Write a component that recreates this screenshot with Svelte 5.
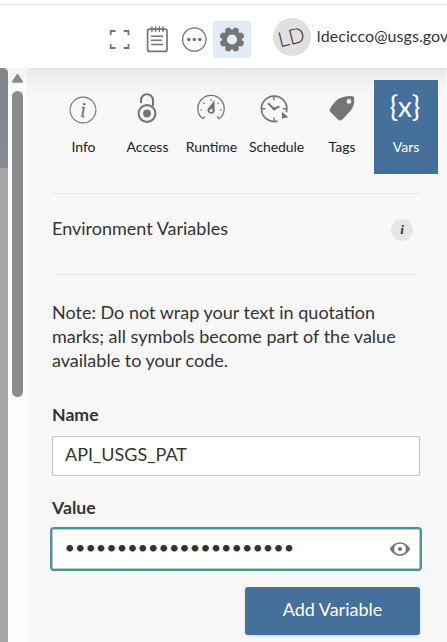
<script>
  const tabs = [
    { id: 'info', label: 'Info' },
    { id: 'access', label: 'Access' },
    { id: 'runtime', label: 'Runtime' },
    { id: 'schedule', label: 'Schedule' },
    { id: 'tags', label: 'Tags' },
    { id: 'vars', label: 'Vars' }
  ];
  let active = $state('vars');
  let name = $state('API_USGS_PAT');
  const secret = '•'.repeat(22);
</script>

<div class="app">
  <header>
    <button class="tool" aria-label="Expand">
      <svg width="38" height="38" viewBox="0 0 38 38"><path d="M10.7 15V11H15.5M23.7 11H28.5V15M28.5 24V28H23.7M15.5 28H10.7V24" fill="none" stroke="#757575" stroke-width="1.8" /></svg>
    </button>
    <button class="tool" aria-label="Logs">
      <svg width="38" height="38" viewBox="0 0 38 38" fill="none" stroke="#757575" stroke-width="1.7" stroke-linecap="round">
        <rect x="9.6" y="9.2" width="19.4" height="22.2" rx="2" />
        <path d="M13.9 7v4.5M17.6 7v4.5M21.3 7v4.5M25 7v4.5M13.6 16.2h11M13.6 20.3h9.5M13.6 24.6h11" stroke-width="1.5" />
      </svg>
    </button>
    <button class="tool" aria-label="More">
      <svg width="38" height="38" viewBox="0 0 38 38"><circle cx="19.3" cy="19.5" r="11.7" fill="none" stroke="#757575" stroke-width="1.3" /><g fill="#757575"><circle cx="13.8" cy="19.5" r="1.8" /><circle cx="19.3" cy="19.5" r="1.8" /><circle cx="24.8" cy="19.5" r="1.8" /></g></svg>
    </button>
    <button class="tool on" aria-label="Settings">
      <svg width="38" height="37" viewBox="0 0 38 37">
        <g transform="translate(19 18.5)" fill="#757575">
          {#each [22.5, 67.5, 112.5, 157.5, 202.5, 247.5, 292.5, 337.5] as a}
            <path d="M-3.6-7L-2.5-12Q0-13.2 2.5-12L3.6-7Z" transform="rotate({a})" />
          {/each}
          <circle r="9.9" />
          <circle r="5.1" fill="#e2ecf7" />
        </g>
      </svg>
    </button>
    <span class="avatar"><span>LD</span></span>
    <span class="email">ldecicco@usgs.gov</span>
  </header>

  <div class="body">
    <div class="page"></div>
    <div class="track">
      <svg width="14" height="12" viewBox="0 0 14 12"><path d="M6.5 1.8L1.8 8.8H11.2Z" fill="#8b8b8b" stroke="#8b8b8b" stroke-width="1.7" stroke-linejoin="round" /></svg>
      <div class="thumb"></div>
    </div>

    <main>
      <nav>
        {#each tabs as t}
          <button class="tab {t.id}" class:active={active === t.id} onclick={() => (active = t.id)}>
            <svg width="34" height="34" viewBox="0 0 34 34">
              {#if t.id === 'info'}
                <circle cx="17" cy="18" r="12.9" fill="none" stroke="#757575" stroke-width="1.1" />
                <text x="17" y="24.5" text-anchor="middle" font-family="Liberation Serif, serif" font-style="italic" font-size="20" fill="#757575" stroke="#757575" stroke-width=".25">i</text>
              {:else if t.id === 'access'}
                <path d="M11 11V8.3A6 6 0 0 1 23 8.3V14" fill="none" stroke="#757575" stroke-width="2.1" />
                <circle cx="17" cy="21.5" r="8.4" fill="none" stroke="#757575" stroke-width="2.1" />
                <circle cx="17" cy="21.5" r="3.9" fill="#757575" />
              {:else if t.id === 'runtime'}
                <path d="M8.5 26.6A13.2 13.2 0 1 1 25.5 26.6" fill="none" stroke="#757575" stroke-width="1.3" />
                <path d="M8.8 27L10.8 24.4M25.2 27L23.2 24.4M6.5 18.2H8M26 18.2H27.5M17 7.3V9M9.4 10.6L10.5 11.7M24.6 10.6L23.5 11.7" stroke="#757575" stroke-width="1.3" />
                <path d="M20.4 8L14.8 15.4A3.6 3.6 0 1 0 20.7 17.4Z" fill="#757575" />
                <circle cx="17.1" cy="18.4" r="1.5" fill="#f8f8f8" />
              {:else if t.id === 'schedule'}
                <path d="M18.5 29.1A12.7 12.7 0 1 1 27.4 20.2" fill="none" stroke="#757575" stroke-width="1.7" />
                <path d="M15 4.5V8.2M15 25.5V29M3 16.8H6.5M23.8 16.8H27.3" stroke="#757575" stroke-width="1.4" />
                <path d="M9 11.2L15.2 17.1L20.4 14.4" fill="none" stroke="#757575" stroke-width="1.9" />
                <circle cx="15.2" cy="16.8" r="1.8" fill="#757575" />
                <path d="M22.9 19.8L22.9 26.6L29.4 25.2Z" fill="#757575" />
              {:else if t.id === 'tags'}
                <path fill-rule="evenodd" fill="#757575" d="M14 6.6Q21 3 27.6 4.2Q29.2 4.4 29.2 6.2Q29.6 13 26.2 18L17.4 27.5Q15.2 29.5 13 27.5L5.6 20.3Q3.7 18.3 5.4 16Q10 9 14 6.6ZM24 7A2.4 2.4 0 1 0 24 11.8A2.4 2.4 0 1 0 24 7Z" />
              {:else}
                <text x="16" y="25" text-anchor="middle" font-family="Lato, sans-serif" font-size="28" fill="#fff" textLength="31" lengthAdjust="spacingAndGlyphs">{'{x}'}</text>
              {/if}
            </svg>
            <span>{t.label}</span>
          </button>
        {/each}
      </nav>

      <section class="heading">
        <h2>Environment Variables</h2>
        <span class="help">i</span>
      </section>

      <p>Note: Do not wrap your text in quotation<br />marks; all symbols become part of the value<br />available to your code.</p>

      <label for="name">Name</label>
      <input id="name" bind:value={name} spellcheck="false" />

      <div class="label">Value</div>
      <div class="secret">
        <span>{secret}</span>
        <svg width="20" height="14" viewBox="0 0 20 14"><path d="M.7 7Q4.5 1 10 1T19.3 7Q15.5 13 10 13T.7 7Z" fill="#fff" stroke="#757575" stroke-width="1.5" /><path d="M.7 7Q3 3.4 6 2.2A7 7 0 0 0 6 11.8Q3 10.6.7 7ZM19.3 7Q17 3.4 14 2.2A7 7 0 0 1 14 11.8Q17 10.6 19.3 7Z" fill="#757575" /><circle cx="10" cy="7" r="2.1" fill="#757575" /></svg>
      </div>

      <div class="actions"><button>Add Variable</button></div>
    </main>
    <div class="edge"></div>
  </div>
</div>

<style>
  .app { width: 447px; height: 642px; overflow: hidden; font-family: Lato, sans-serif; color: #333; background: #fff; display: flex; flex-direction: column; }
  .app * { box-sizing: border-box; }
  button { border: 0; padding: 0; background: none; font: inherit; color: inherit; }
  svg { display: block; overflow: visible; }
  header { height: 68px; flex: none; padding: 16px 0 0 100px; display: flex; align-items: flex-start; background: linear-gradient(#fff 4px, #ddd 4px, #ddd 5px, #fff 5px); white-space: nowrap; }
  .tool { width: 37.6px; height: 38px; margin-top: 4px; flex: none; }
  .tool.on { width: 38px; height: 37px; margin-top: 5px; background: #e2ecf7; border-radius: 3px; }
  .avatar { flex: none; width: 38px; height: 38px; margin: 2px 0 0 22px; border-radius: 50%; background: #e0e0e0; display: grid; place-items: center; font-size: 21px; font-weight: 300; color: #333; }
  .avatar span { transform: rotate(-14deg) translateY(-1.5px); line-height: 1; }
  .email { margin: 9px 0 0 6px; font-size: 16px; line-height: 22px; letter-spacing: 0.08px; flex: none; }
  .body { flex: 1; display: flex; background: linear-gradient(#e6e6e6, #f0f0f0 10px, #f8f8f8 30px); }
  .page { width: 8px; flex: none; border-top-right-radius: 5px; background: linear-gradient(#7e838c, #858a94 100px, #a5a6a9 100px); }
  .track { width: 19px; flex: none; background: linear-gradient(#f4f4f4, #fcfcfc 20px); padding: 5px 0 0 3px; }
  .track svg { margin-left: 0; }
  .thumb { width: 11px; height: 306px; margin: 6px 0 0 1px; border-radius: 6px; background: #8b8b8b; }
  main { width: 418px; flex: none; padding: 12px 0 0 25px; }
  nav { display: flex; width: 387px; margin-left: -1px; }
  .tab { width: 64px; height: 94px; padding-top: 12px; flex: none; display: flex; flex-direction: column; align-items: center; font-size: 14px; line-height: 20px; color: #222; }
  .tab span { margin-top: 11px; padding-left: 1px; }
  .tab.schedule { width: 66px; }
  .tab.schedule span { letter-spacing: -0.08px; }
  .tab.tags { width: 65px; }
  .tab.active { background: #45709b; color: #fff; }
  .tab.active span { padding-left: 0; }
  .heading { width: 368px; height: 82px; margin-top: 19px; border: 1px solid #ebebeb; border-width: 1px 0; display: flex; justify-content: space-between; align-items: center; padding: 0 7px 10px 0; }
  h2 { margin: -2px 0 0; font-size: 18px; font-weight: 400; line-height: 24px; }
  .help { width: 22px; height: 22px; border-radius: 50%; background: #e6e6e6; font: italic bold 13px/22px "Liberation Serif", serif; text-align: center; margin-bottom: -1px; }
  p { margin: 25px 0 31px; font-size: 18px; line-height: 24px; white-space: nowrap; }
  label, .label { display: block; font-size: 17.7px; font-weight: 700; line-height: 24px; }
  input { display: block; width: 368px; height: 40px; margin: 9px 0 20px; padding: 0 12px 5px; border: 1px solid #c6c6c6; border-radius: 0; background: #fff; color: #333; font: 18px Lato, sans-serif; outline: 0; }
  .secret { width: 372px; height: 44px; margin: 7px 0 0 -2px; border: 2px solid #45949a; border-radius: 4px; background: #fff; box-shadow: inset 0 0 0 1px #c6c6c6; display: flex; justify-content: space-between; align-items: center; padding: 0 10px 0 12.5px; font-size: 18px; }
  .secret span { margin-bottom: 4px; }
  .actions { display: flex; justify-content: flex-end; width: 368px; margin-top: 16px; }
  .actions button { width: 175px; height: 48px; border-radius: 3px; background: #45709b; color: #fff; font-size: 18px; padding-bottom: 5px; box-shadow: 0 1px 3px #0002; }
  .edge { flex: 1; background: #ffffff55; }
</style>
